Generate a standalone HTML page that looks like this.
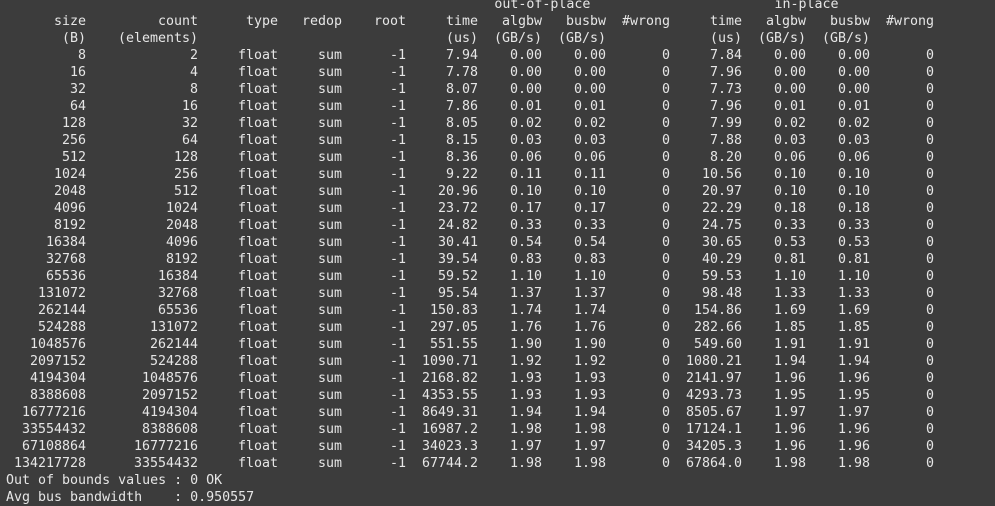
<!DOCTYPE html>
<html><head><meta charset="utf-8"><style>
html,body{margin:0;padding:0;background:#3c3c3c;width:995px;height:506px;overflow:hidden}
#t{position:absolute;left:6px;top:-4.5px;font-family:"DejaVu Sans Mono","Liberation Mono",monospace;font-size:13.3px;line-height:17px;color:#e6e6e6}
.r{display:grid;grid-template-columns:80px 112px 80px 64px 64px 72px 64px 64px 64px 72px 64px 64px 64px;height:17px}
.r span{text-align:right;white-space:pre}
.l{height:17px;white-space:pre}
</style></head><body><div id="t"><div class="l">                                                             out-of-place                       in-place</div><div class="r"><span>size</span><span>count</span><span>type</span><span>redop</span><span>root</span><span>time</span><span>algbw</span><span>busbw</span><span>#wrong</span><span>time</span><span>algbw</span><span>busbw</span><span>#wrong</span></div><div class="r"><span>(B)</span><span>(elements)</span><span></span><span></span><span></span><span>(us)</span><span>(GB/s)</span><span>(GB/s)</span><span></span><span>(us)</span><span>(GB/s)</span><span>(GB/s)</span><span></span></div><div class="r"><span>8</span><span>2</span><span>float</span><span>sum</span><span>-1</span><span>7.94</span><span>0.00</span><span>0.00</span><span>0</span><span>7.84</span><span>0.00</span><span>0.00</span><span>0</span></div><div class="r"><span>16</span><span>4</span><span>float</span><span>sum</span><span>-1</span><span>7.78</span><span>0.00</span><span>0.00</span><span>0</span><span>7.96</span><span>0.00</span><span>0.00</span><span>0</span></div><div class="r"><span>32</span><span>8</span><span>float</span><span>sum</span><span>-1</span><span>8.07</span><span>0.00</span><span>0.00</span><span>0</span><span>7.73</span><span>0.00</span><span>0.00</span><span>0</span></div><div class="r"><span>64</span><span>16</span><span>float</span><span>sum</span><span>-1</span><span>7.86</span><span>0.01</span><span>0.01</span><span>0</span><span>7.96</span><span>0.01</span><span>0.01</span><span>0</span></div><div class="r"><span>128</span><span>32</span><span>float</span><span>sum</span><span>-1</span><span>8.05</span><span>0.02</span><span>0.02</span><span>0</span><span>7.99</span><span>0.02</span><span>0.02</span><span>0</span></div><div class="r"><span>256</span><span>64</span><span>float</span><span>sum</span><span>-1</span><span>8.15</span><span>0.03</span><span>0.03</span><span>0</span><span>7.88</span><span>0.03</span><span>0.03</span><span>0</span></div><div class="r"><span>512</span><span>128</span><span>float</span><span>sum</span><span>-1</span><span>8.36</span><span>0.06</span><span>0.06</span><span>0</span><span>8.20</span><span>0.06</span><span>0.06</span><span>0</span></div><div class="r"><span>1024</span><span>256</span><span>float</span><span>sum</span><span>-1</span><span>9.22</span><span>0.11</span><span>0.11</span><span>0</span><span>10.56</span><span>0.10</span><span>0.10</span><span>0</span></div><div class="r"><span>2048</span><span>512</span><span>float</span><span>sum</span><span>-1</span><span>20.96</span><span>0.10</span><span>0.10</span><span>0</span><span>20.97</span><span>0.10</span><span>0.10</span><span>0</span></div><div class="r"><span>4096</span><span>1024</span><span>float</span><span>sum</span><span>-1</span><span>23.72</span><span>0.17</span><span>0.17</span><span>0</span><span>22.29</span><span>0.18</span><span>0.18</span><span>0</span></div><div class="r"><span>8192</span><span>2048</span><span>float</span><span>sum</span><span>-1</span><span>24.82</span><span>0.33</span><span>0.33</span><span>0</span><span>24.75</span><span>0.33</span><span>0.33</span><span>0</span></div><div class="r"><span>16384</span><span>4096</span><span>float</span><span>sum</span><span>-1</span><span>30.41</span><span>0.54</span><span>0.54</span><span>0</span><span>30.65</span><span>0.53</span><span>0.53</span><span>0</span></div><div class="r"><span>32768</span><span>8192</span><span>float</span><span>sum</span><span>-1</span><span>39.54</span><span>0.83</span><span>0.83</span><span>0</span><span>40.29</span><span>0.81</span><span>0.81</span><span>0</span></div><div class="r"><span>65536</span><span>16384</span><span>float</span><span>sum</span><span>-1</span><span>59.52</span><span>1.10</span><span>1.10</span><span>0</span><span>59.53</span><span>1.10</span><span>1.10</span><span>0</span></div><div class="r"><span>131072</span><span>32768</span><span>float</span><span>sum</span><span>-1</span><span>95.54</span><span>1.37</span><span>1.37</span><span>0</span><span>98.48</span><span>1.33</span><span>1.33</span><span>0</span></div><div class="r"><span>262144</span><span>65536</span><span>float</span><span>sum</span><span>-1</span><span>150.83</span><span>1.74</span><span>1.74</span><span>0</span><span>154.86</span><span>1.69</span><span>1.69</span><span>0</span></div><div class="r"><span>524288</span><span>131072</span><span>float</span><span>sum</span><span>-1</span><span>297.05</span><span>1.76</span><span>1.76</span><span>0</span><span>282.66</span><span>1.85</span><span>1.85</span><span>0</span></div><div class="r"><span>1048576</span><span>262144</span><span>float</span><span>sum</span><span>-1</span><span>551.55</span><span>1.90</span><span>1.90</span><span>0</span><span>549.60</span><span>1.91</span><span>1.91</span><span>0</span></div><div class="r"><span>2097152</span><span>524288</span><span>float</span><span>sum</span><span>-1</span><span>1090.71</span><span>1.92</span><span>1.92</span><span>0</span><span>1080.21</span><span>1.94</span><span>1.94</span><span>0</span></div><div class="r"><span>4194304</span><span>1048576</span><span>float</span><span>sum</span><span>-1</span><span>2168.82</span><span>1.93</span><span>1.93</span><span>0</span><span>2141.97</span><span>1.96</span><span>1.96</span><span>0</span></div><div class="r"><span>8388608</span><span>2097152</span><span>float</span><span>sum</span><span>-1</span><span>4353.55</span><span>1.93</span><span>1.93</span><span>0</span><span>4293.73</span><span>1.95</span><span>1.95</span><span>0</span></div><div class="r"><span>16777216</span><span>4194304</span><span>float</span><span>sum</span><span>-1</span><span>8649.31</span><span>1.94</span><span>1.94</span><span>0</span><span>8505.67</span><span>1.97</span><span>1.97</span><span>0</span></div><div class="r"><span>33554432</span><span>8388608</span><span>float</span><span>sum</span><span>-1</span><span>16987.2</span><span>1.98</span><span>1.98</span><span>0</span><span>17124.1</span><span>1.96</span><span>1.96</span><span>0</span></div><div class="r"><span>67108864</span><span>16777216</span><span>float</span><span>sum</span><span>-1</span><span>34023.3</span><span>1.97</span><span>1.97</span><span>0</span><span>34205.3</span><span>1.96</span><span>1.96</span><span>0</span></div><div class="r"><span>134217728</span><span>33554432</span><span>float</span><span>sum</span><span>-1</span><span>67744.2</span><span>1.98</span><span>1.98</span><span>0</span><span>67864.0</span><span>1.98</span><span>1.98</span><span>0</span></div><div class="l">Out of bounds values : 0 OK</div><div class="l">Avg bus bandwidth    : 0.950557</div></div></body></html>
